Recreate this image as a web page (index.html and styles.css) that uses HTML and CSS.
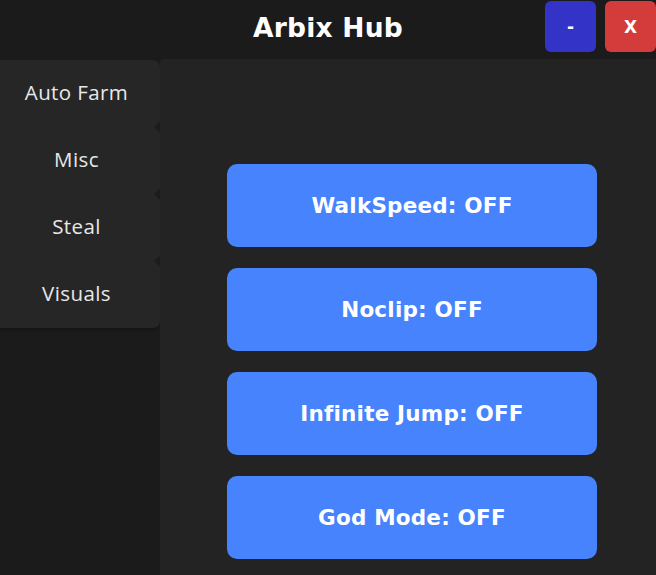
FILE: index.html
```html
<!DOCTYPE html>
<html lang="en">
<head>
    <meta charset="UTF-8">
    <meta name="viewport" content="width=device-width, initial-scale=1.0">
    <title>Arbix Hub</title>
    <link rel="stylesheet" href="styles.css">
</head>
<body>
    <div class="hub">
        <div class="topbar">
            <h1 class="title">Arbix Hub</h1>
            <div class="window-buttons">
                <button class="win-btn minimize">-</button>
                <button class="win-btn close">X</button>
            </div>
        </div>

        <div class="main">
            <div class="sidebar">
                <div class="tabs">
                    <button class="tab">Auto Farm</button>
                    <button class="tab">Misc</button>
                    <button class="tab">Steal</button>
                    <button class="tab">Visuals</button>
                </div>
            </div>

            <div class="content">
                <button class="toggle">WalkSpeed: OFF</button>
                <button class="toggle">Noclip: OFF</button>
                <button class="toggle">Infinite Jump: OFF</button>
                <button class="toggle">God Mode: OFF</button>
            </div>
        </div>
    </div>
</body>
</html>
```

FILE: styles.css
```css
* {
    margin: 0;
    padding: 0;
    box-sizing: border-box;
}

body {
    background: #1b1b1b;
    font-family: "DejaVu Sans", "Noto Sans", sans-serif;
    color: #ffffff;
    width: 656px;
    height: 575px;
    overflow: hidden;
}

.hub {
    display: flex;
    flex-direction: column;
    height: 100%;
}

.topbar {
    position: relative;
    height: 59px;
    display: flex;
    align-items: center;
    justify-content: center;
}

.title {
    font-size: 26.5px;
    font-weight: bold;
    letter-spacing: 0.2px;
    margin-top: -4px;
}

.window-buttons {
    position: absolute;
    top: 1px;
    right: 0;
    display: flex;
    gap: 9px;
}

.win-btn {
    width: 51px;
    height: 51px;
    border: none;
    border-radius: 6px;
    color: #ffffff;
    font-family: inherit;
    font-weight: bold;
    font-size: 17px;
}

.minimize {
    background: #3333c7;
}

.close {
    background: #d43b3b;
}

.main {
    flex: 1;
    display: flex;
}

.sidebar {
    width: 160px;
}

.tabs {
    background: #262626;
    border-radius: 0 7px 7px 0;
    margin-top: 1px;
    display: flex;
    flex-direction: column;
    box-shadow: 0 2px 3px rgba(0, 0, 0, 0.25);
}

.tab {
    height: 67px;
    background: none;
    border: none;
    color: #e8e8e8;
    font-family: "Open Sans", sans-serif;
    font-size: 20.5px;
    letter-spacing: 0.4px;
    padding: 0 7px 4px 0;
    position: relative;
}

.tab + .tab::before {
    content: "";
    position: absolute;
    top: -6px;
    right: 0;
    border-top: 6px solid transparent;
    border-bottom: 6px solid transparent;
    border-right: 6px solid #1c1c1c;
}

.content {
    flex: 1;
    background: #232323;
    border-top-left-radius: 4px;
    display: flex;
    flex-direction: column;
    gap: 21px;
    padding: 105px 59px 0 67px;
}

.toggle {
    height: 83px;
    background: #4683fc;
    border: none;
    border-radius: 10px;
    color: #ffffff;
    font-family: "DejaVu Sans", sans-serif;
    font-weight: bold;
    font-size: 21.5px;
    letter-spacing: 0.2px;
}
```
